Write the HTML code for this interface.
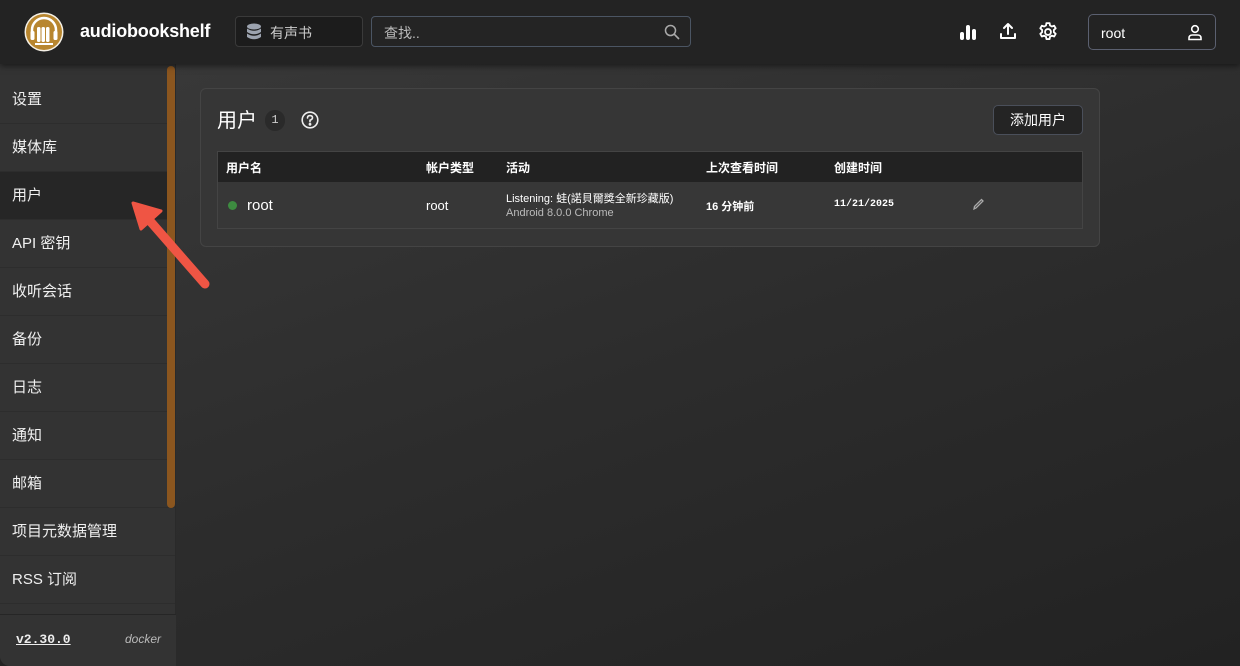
<!DOCTYPE html>
<html><head><meta charset="utf-8"><style>
*{box-sizing:border-box;margin:0;padding:0}
body{width:1240px;height:666px;overflow:hidden;background:#232323;font-family:"Liberation Sans","Noto Sans CJK SC",sans-serif;color:#fff;position:relative}
.top{position:absolute;left:0;top:0;width:1240px;height:64px;background:#232323;box-shadow:0 2px 6px rgba(0,0,0,.5);z-index:2}
.main{position:absolute;left:176px;top:64px;right:0;bottom:0;background:linear-gradient(160deg,#383838 0%,#2c2c2c 50%,#222 100%)}
.side{position:absolute;left:0;top:64px;width:176px;bottom:0;background:#333;border-right:1px solid #2a2a2a;border-bottom-left-radius:10px}
.item{height:48px;line-height:48px;padding-left:12px;font-size:15px;border-bottom:1px solid #2d2d2d;color:#f0f0f0}
.item.act{background:#262626}
.scroll{position:absolute;left:167px;top:66px;width:8px;height:442px;background:#8b561f;border-radius:4px}
.foot{position:absolute;left:0;bottom:0;width:176px;height:52px;border-top:1px solid #262626;background:#333;border-bottom-left-radius:10px}
.card{position:absolute;left:200px;top:88px;width:900px;height:159px;background:#363636;border:1px solid #444;border-radius:6px}
</style></head><body>
<div class="main"></div>
<div class="top">
  <svg style="position:absolute;left:24px;top:12px" width="40" height="40" viewBox="0 0 40 40">
    <circle cx="20" cy="20" r="19.5" fill="#f5f0e6"/><circle cx="20" cy="20" r="18" fill="#b8862f"/>
    <path d="M8 22 V18 A12 12 0 0 1 32 18 V22" fill="none" stroke="#fff" stroke-width="2.5"/>
    <rect x="6.5" y="19" width="4" height="9" rx="1.5" fill="#fff"/><rect x="29.5" y="19" width="4" height="9" rx="1.5" fill="#fff"/>
    <rect x="13" y="15" width="3.5" height="15" rx="1.5" fill="#fff"/><rect x="17.5" y="15" width="3.5" height="15" rx="1.5" fill="#fff"/><rect x="22" y="15" width="3.5" height="15" rx="1.5" fill="#fff"/>
    <rect x="11" y="31" width="18" height="2" fill="#fff"/>
  </svg>
  <div style="position:absolute;left:80px;top:21px;font-size:18px;font-weight:bold;letter-spacing:-.2px">audiobookshelf</div>
  <div style="position:absolute;left:235px;top:16px;width:128px;height:31px;background:#1c1c1c;border:1px solid #3a3a3a;border-radius:4px">
    <svg style="position:absolute;left:10px;top:6px" width="16" height="18" viewBox="0 0 16 18"><ellipse cx="8" cy="3.5" rx="7" ry="3" fill="#9ca3af"/><path d="M1 5.5 Q8 10 15 5.5 V9 Q8 13.5 1 9Z M1 10.5 Q8 15 15 10.5 V14 Q8 18.5 1 14Z" fill="#9ca3af"/></svg>
    <span style="position:absolute;left:34px;top:6px;font-size:14px;color:#ccc">有声书</span>
  </div>
  <div style="position:absolute;left:371px;top:16px;width:320px;height:31px;background:#242424;border:1px solid #4b5563;border-radius:4px">
    <span style="position:absolute;left:12px;top:6px;font-size:14px;color:#bbb">查找..</span>
    <svg style="position:absolute;right:10px;top:7px" width="16" height="16" viewBox="0 0 16 16"><circle cx="6.5" cy="6.5" r="5" fill="none" stroke="#aaa" stroke-width="1.5"/><path d="M10.2 10.2 L15 15" stroke="#aaa" stroke-width="1.6"/></svg>
  </div>
  <svg style="position:absolute;left:959px;top:24px" width="18" height="16" viewBox="0 0 18 16"><rect x="1" y="8" width="4" height="8" rx="2" fill="#fff"/><rect x="7" y="1" width="4" height="15" rx="2" fill="#fff"/><rect x="13" y="5" width="4" height="11" rx="2" fill="#fff"/></svg>
  <svg style="position:absolute;left:999px;top:22px" width="18" height="18" viewBox="0 0 18 18" fill="none" stroke="#fff" stroke-width="2" stroke-linecap="round" stroke-linejoin="round"><path d="M2 12 V16 H16 V12"/><path d="M9 12 V2 M5 6 L9 2 L13 6"/></svg>
  <svg style="position:absolute;left:1037px;top:21px" width="22" height="22" viewBox="0 0 24 24" fill="none" stroke="#fff" stroke-width="2"><path d="M10.3 2.3h3.4l.5 2.6 2 1.1 2.5-.9 1.7 2.9-2 1.8v2.4l2 1.8-1.7 2.9-2.5-.9-2 1.1-.5 2.6h-3.4l-.5-2.6-2-1.1-2.5.9-1.7-2.9 2-1.8v-2.4l-2-1.8 1.7-2.9 2.5.9 2-1.1z" stroke-linejoin="round"/><circle cx="12" cy="12" r="3.2"/></svg>
  <div style="position:absolute;left:1088px;top:14px;width:128px;height:36px;border:1px solid #5b6070;border-radius:5px;background:#232323">
    <span style="position:absolute;left:12px;top:10px;font-size:14px">root</span>
    <svg style="position:absolute;right:12px;top:9px" width="16" height="17" viewBox="0 0 16 17" fill="none" stroke="#fff" stroke-width="1.6"><circle cx="8" cy="5" r="3.3"/><path d="M2 15.5 V14 Q2 11 5.5 11 H10.5 Q14 11 14 14 V15.5 Z"/></svg>
  </div>
</div>
<div class="side">
  <div style="height:12px"></div>
  <div class="item">设置</div><div class="item">媒体库</div><div class="item act">用户</div><div class="item">API 密钥</div><div class="item">收听会话</div><div class="item">备份</div><div class="item">日志</div><div class="item">通知</div><div class="item">邮箱</div><div class="item">项目元数据管理</div><div class="item">RSS 订阅</div>
  <div class="foot">
    <span style="position:absolute;left:16px;top:17px;font-family:'Liberation Mono',monospace;font-size:13px;font-weight:bold;text-decoration:underline;color:#eee">v2.30.0</span>
    <span style="position:absolute;right:15px;top:17px;font-size:12px;font-style:italic;color:#bbb">docker</span>
  </div>
</div>
<div class="scroll"></div>
<div class="card">
  <div style="position:absolute;left:16px;top:15px;font-size:20px">用户</div>
  <div style="position:absolute;left:64px;top:21px;width:20px;height:21px;border-radius:10px;background:#2a2a2a;font-size:12px;text-align:center;line-height:21px;color:#ccc;font-family:'Liberation Mono',monospace">1</div>
  <svg style="position:absolute;left:100px;top:22px" width="18" height="18" viewBox="0 0 18 18" fill="none" stroke="#eee" stroke-width="1.6"><circle cx="9" cy="9" r="7.8"/><path d="M6.5 7 Q6.5 4.6 9 4.6 Q11.5 4.6 11.5 6.8 Q11.5 8.3 9 9.3 V10.8" stroke-linecap="round"/><circle cx="9" cy="13.3" r=".6" fill="#eee"/></svg>
  <div style="position:absolute;left:792px;top:16px;width:90px;height:30px;background:#242424;border:1px solid #4a4f5a;border-radius:5px;font-size:14px;text-align:center;line-height:28px">添加用户</div>
  <div style="position:absolute;left:16px;top:62px;width:866px;height:78px;border:1px solid #444">
    <div style="height:30px;background:#222;font-size:12px;font-weight:bold;position:relative">
      <span style="position:absolute;left:8px;top:7px">用户名</span><span style="position:absolute;left:208px;top:7px">帐户类型</span><span style="position:absolute;left:288px;top:7px">活动</span><span style="position:absolute;left:488px;top:7px">上次查看时间</span><span style="position:absolute;left:616px;top:7px">创建时间</span>
    </div>
    <div style="position:relative;height:46px;background:#373737">
      <span style="position:absolute;left:10px;top:19px;width:9px;height:9px;border-radius:5px;background:#3d8b40"></span>
      <span style="position:absolute;left:29px;top:15px;font-size:15px">root</span>
      <span style="position:absolute;left:208px;top:16px;font-size:13px">root</span>
      <span style="position:absolute;left:288px;top:8px;font-size:11px">Listening: 蛙(諾貝爾獎全新珍藏版)</span>
      <span style="position:absolute;left:288px;top:25px;font-size:11px;color:#bbb">Android 8.0.0 Chrome</span>
      <span style="position:absolute;left:488px;top:16px;font-size:11px;font-weight:bold">16 分钟前</span>
      <span style="position:absolute;left:616px;top:17px;font-size:10px;font-weight:bold;font-family:'Liberation Mono',monospace">11/21/2025</span>
      <svg style="position:absolute;left:754px;top:15px" width="13" height="14" viewBox="0 0 13 14" fill="none" stroke="#aaa" stroke-width="1.3"><path d="M2 12 L2.5 9.5 L9.5 2.5 L11 4 L4 11 Z"/></svg>
    </div>
  </div>
</div>
<svg style="position:absolute;left:0;top:0" width="1240" height="666" viewBox="0 0 1240 666">
  <path d="M205 284 L150 221" stroke="#ef5544" stroke-width="9" stroke-linecap="round"/>
  <path d="M133 203 L161 211 L141 229 Z" fill="#ef5544" stroke="#ef5544" stroke-width="3" stroke-linejoin="round"/>
</svg>
</body></html>
